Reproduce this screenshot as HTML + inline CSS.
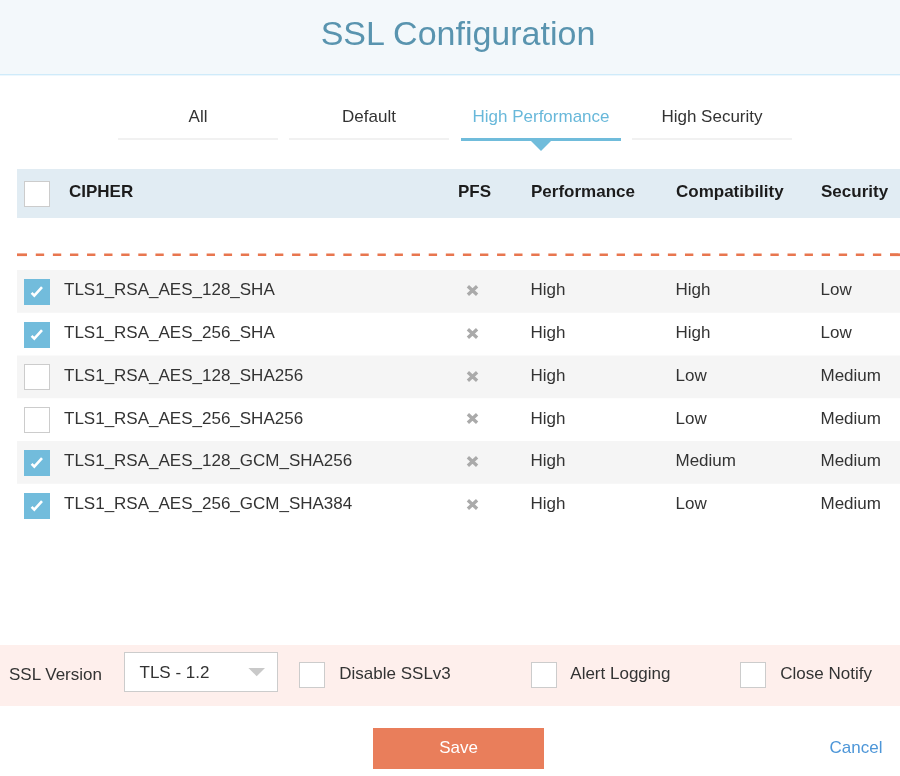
<!DOCTYPE html>
<html><head><meta charset="utf-8"><title>SSL Configuration</title>
<style>
html,body{margin:0;padding:0;}
body{width:900px;height:776px;position:relative;overflow:hidden;background:#fff;font-family:"Liberation Sans",sans-serif;color:#333;font-size:17px;}
.abs{position:absolute;white-space:nowrap;}
#hdr{left:0;top:0;width:900px;height:74px;background:#f3f8fb;border-bottom:1px solid #cfebfa;box-shadow:0 1px 0 #edf7fd;}
#title{left:0;width:916px;top:12.5px;text-align:center;font-size:34px;line-height:40px;color:#5994af;}
.tab{top:97px;width:160px;height:41px;border-bottom:2px solid #f1f1f1;text-align:center;line-height:40px;font-size:17px;color:#333;}
.tab.act{color:#68b8da;border-bottom:3px solid #70bcdb;height:41px;}
#tri{left:531px;top:141px;width:0;height:0;border-left:10px solid transparent;border-right:10px solid transparent;border-top:10px solid #70bcdb;}
#thead{left:17px;top:169px;width:883px;height:49px;background:#e1ecf3;}
.th{top:167px;height:49px;line-height:49px;font-weight:bold;color:#1c1c1c;font-size:17px;}
.cb{width:24px;height:24px;border:1px solid #ccc;background:#fff;}
.cb.on{background:#72bcdc;border-color:#72bcdc;}
.td{height:20px;line-height:20px;font-size:17px;color:#333;}
#bar{left:0;top:645px;width:900px;height:61px;background:#feefec;}
.bl{line-height:20px;font-size:17px;color:#333;}
#sel{left:124px;top:652px;width:152px;height:38px;border:1px solid #ccc;background:#fff;}
#save{left:373px;top:728px;width:171px;height:41px;background:#e97e5b;color:#fff;text-align:center;line-height:39px;font-size:17px;}
#cancel{left:829.5px;top:738px;line-height:20px;color:#4d96d8;font-size:17px;}
#wrap{position:absolute;left:0;top:0;width:900px;height:776px;overflow:hidden;will-change:transform;}
</style></head><body>
<div id="wrap">
<div id="hdr" class="abs"></div>
<div id="title" class="abs">SSL Configuration</div>

<div class="abs tab" style="left:118px">All</div>
<div class="abs tab" style="left:289px">Default</div>
<div class="abs tab act" style="left:461px">High Performance</div>
<div class="abs tab" style="left:632px">High Security</div>
<div id="tri" class="abs"></div>

<div id="thead" class="abs"></div>
<div class="abs cb" style="left:24px;top:181px"></div>
<div class="abs th" style="left:69px">CIPHER</div>
<div class="abs th" style="left:458px">PFS</div>
<div class="abs th" style="left:531px">Performance</div>
<div class="abs th" style="left:676px">Compatibility</div>
<div class="abs th" style="left:821px">Security</div>

<svg class="abs" style="left:0;top:250px" width="900" height="10" viewBox="0 0 900 10"><line x1="17" y1="4.75" x2="27" y2="4.75" stroke="#e8764f" stroke-width="2.7"/><line x1="890" y1="4.75" x2="900" y2="4.75" stroke="#e8764f" stroke-width="2.7"/><line x1="35.8" y1="4.75" x2="900" y2="4.75" stroke="#e8764f" stroke-width="2.7" stroke-dasharray="8.35 8.734"/></svg>

<!--ROWS-->
<svg class="abs" style="left:17px;top:270px" width="883" height="260" viewBox="0 0 883 260"><rect x="0" y="0.00" width="883" height="42.75" fill="#f5f5f5"/><rect x="0" y="85.50" width="883" height="42.75" fill="#f5f5f5"/><rect x="0" y="171.00" width="883" height="42.75" fill="#f5f5f5"/></svg>
<div class="abs cb on" style="left:24px;top:279px"><svg width="24" height="24" viewBox="0 0 24 24" style="display:block"><path d="M6.6 12.9 L9.3 15.6 L17 7.1" fill="none" stroke="#fff" stroke-width="2.6"/></svg></div>
<div class="abs td" style="left:64px;top:280px">TLS1_RSA_AES_128_SHA</div>
<svg class="abs" style="left:466px;top:284.00px" width="13" height="13" viewBox="0 0 13 13"><path d="M1.9 2.2 L11.1 10.8 M11.1 2.2 L1.9 10.8" stroke="#aaa" stroke-width="3.3" fill="none"/></svg>
<div class="abs td" style="left:530.5px;top:280px">High</div>
<div class="abs td" style="left:675.5px;top:280px">High</div>
<div class="abs td" style="left:820.5px;top:280px">Low</div>
<div class="abs cb on" style="left:24px;top:322px"><svg width="24" height="24" viewBox="0 0 24 24" style="display:block"><path d="M6.6 12.9 L9.3 15.6 L17 7.1" fill="none" stroke="#fff" stroke-width="2.6"/></svg></div>
<div class="abs td" style="left:64px;top:323px">TLS1_RSA_AES_256_SHA</div>
<svg class="abs" style="left:466px;top:326.75px" width="13" height="13" viewBox="0 0 13 13"><path d="M1.9 2.2 L11.1 10.8 M11.1 2.2 L1.9 10.8" stroke="#aaa" stroke-width="3.3" fill="none"/></svg>
<div class="abs td" style="left:530.5px;top:323px">High</div>
<div class="abs td" style="left:675.5px;top:323px">High</div>
<div class="abs td" style="left:820.5px;top:323px">Low</div>
<div class="abs cb" style="left:24px;top:364px"></div>
<div class="abs td" style="left:64px;top:366px">TLS1_RSA_AES_128_SHA256</div>
<svg class="abs" style="left:466px;top:369.50px" width="13" height="13" viewBox="0 0 13 13"><path d="M1.9 2.2 L11.1 10.8 M11.1 2.2 L1.9 10.8" stroke="#aaa" stroke-width="3.3" fill="none"/></svg>
<div class="abs td" style="left:530.5px;top:366px">High</div>
<div class="abs td" style="left:675.5px;top:366px">Low</div>
<div class="abs td" style="left:820.5px;top:366px">Medium</div>
<div class="abs cb" style="left:24px;top:407px"></div>
<div class="abs td" style="left:64px;top:409px">TLS1_RSA_AES_256_SHA256</div>
<svg class="abs" style="left:466px;top:412.25px" width="13" height="13" viewBox="0 0 13 13"><path d="M1.9 2.2 L11.1 10.8 M11.1 2.2 L1.9 10.8" stroke="#aaa" stroke-width="3.3" fill="none"/></svg>
<div class="abs td" style="left:530.5px;top:409px">High</div>
<div class="abs td" style="left:675.5px;top:409px">Low</div>
<div class="abs td" style="left:820.5px;top:409px">Medium</div>
<div class="abs cb on" style="left:24px;top:450px"><svg width="24" height="24" viewBox="0 0 24 24" style="display:block"><path d="M6.6 12.9 L9.3 15.6 L17 7.1" fill="none" stroke="#fff" stroke-width="2.6"/></svg></div>
<div class="abs td" style="left:64px;top:451px">TLS1_RSA_AES_128_GCM_SHA256</div>
<svg class="abs" style="left:466px;top:455.00px" width="13" height="13" viewBox="0 0 13 13"><path d="M1.9 2.2 L11.1 10.8 M11.1 2.2 L1.9 10.8" stroke="#aaa" stroke-width="3.3" fill="none"/></svg>
<div class="abs td" style="left:530.5px;top:451px">High</div>
<div class="abs td" style="left:675.5px;top:451px">Medium</div>
<div class="abs td" style="left:820.5px;top:451px">Medium</div>
<div class="abs cb on" style="left:24px;top:493px"><svg width="24" height="24" viewBox="0 0 24 24" style="display:block"><path d="M6.6 12.9 L9.3 15.6 L17 7.1" fill="none" stroke="#fff" stroke-width="2.6"/></svg></div>
<div class="abs td" style="left:64px;top:494px">TLS1_RSA_AES_256_GCM_SHA384</div>
<svg class="abs" style="left:466px;top:497.75px" width="13" height="13" viewBox="0 0 13 13"><path d="M1.9 2.2 L11.1 10.8 M11.1 2.2 L1.9 10.8" stroke="#aaa" stroke-width="3.3" fill="none"/></svg>
<div class="abs td" style="left:530.5px;top:494px">High</div>
<div class="abs td" style="left:675.5px;top:494px">Low</div>
<div class="abs td" style="left:820.5px;top:494px">Medium</div>
<!--/ROWS-->

<div id="bar" class="abs"></div>
<div class="abs bl" style="left:9px;top:665px">SSL Version</div>
<div id="sel" class="abs"></div>
<div class="abs bl" style="left:139.5px;top:662.5px">TLS - 1.2</div>
<svg class="abs" style="left:246px;top:666px" width="22" height="12" viewBox="0 0 22 12"><path d="M2.4 2 L19 2 L10.7 10.2 Z" fill="#c9c9c9"/></svg>
<div class="abs cb" style="left:299px;top:662px"></div>
<div class="abs bl" style="left:339.3px;top:664px">Disable SSLv3</div>
<div class="abs cb" style="left:531px;top:662px"></div>
<div class="abs bl" style="left:570.3px;top:664px">Alert Logging</div>
<div class="abs cb" style="left:740px;top:662px"></div>
<div class="abs bl" style="left:780.3px;top:664px">Close Notify</div>

<div id="save" class="abs">Save</div>
<div id="cancel" class="abs">Cancel</div>
</div>
</body></html>
